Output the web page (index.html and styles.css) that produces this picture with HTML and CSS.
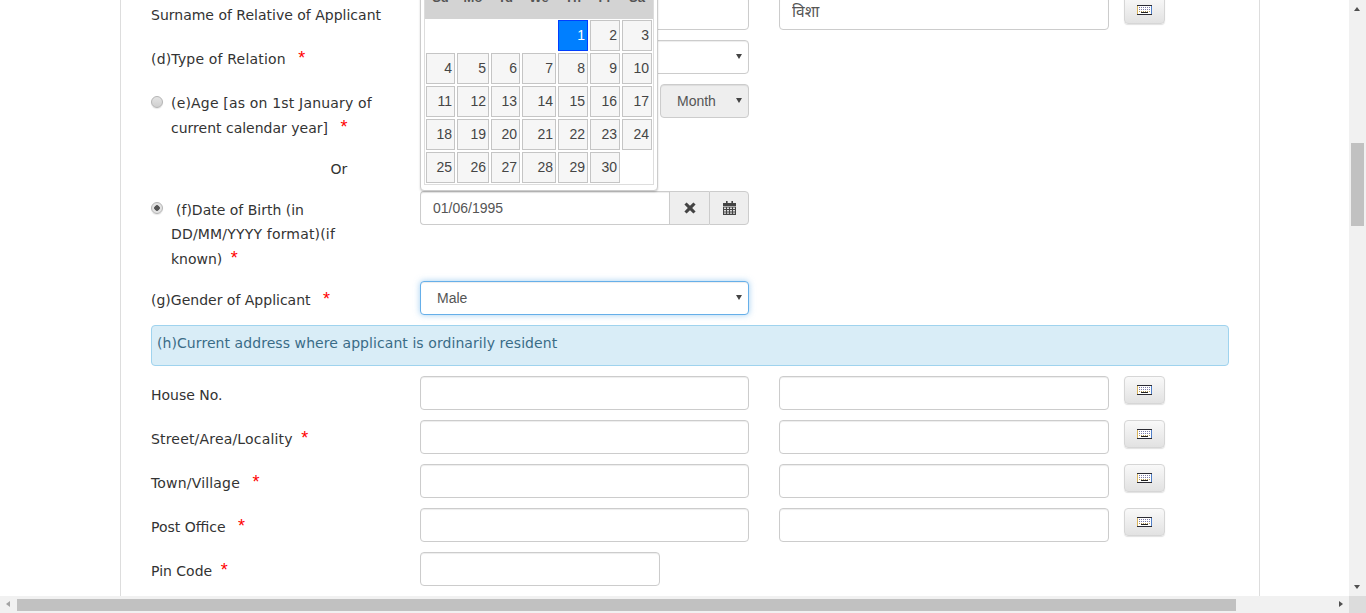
FILE: index.html
```html
<!DOCTYPE html>
<html lang="en">
<head>
<meta charset="utf-8">
<title>Applicant details</title>
<link rel="stylesheet" href="styles.css">
</head>
<body>
<svg class="defs" width="0" height="0" aria-hidden="true">
  <symbol id="kb" viewBox="0 0 15 10">
    <rect x="0.5" y="0.5" width="14" height="9" fill="#fff" stroke="#2b2b33"/>
    <path d="M0.5 1v8" stroke="#d9b45a"/><path d="M14.5 1v8" stroke="#4f7fc9"/>
    <path d="M2 2.5h11" stroke="#7d7da8" stroke-dasharray="1 1"/>
    <path d="M2 4.5h11" stroke="#7d7da8" stroke-dasharray="1 1"/>
    <path d="M2 6.5h11" stroke="#b59a5a" stroke-dasharray="1 1"/>
    <path d="M4 7.5h7" stroke="#222"/>
  </symbol>
</svg>
<div class="window">
  <div class="main">
    <div class="page">
      <form class="panel">
        <div class="row">
          <div class="label pad8">Surname of Relative of Applicant</div>
          <input class="control field" type="text">
          <input class="control wide hindi" type="text" value="विशा">
          <button class="kbd" type="button"><svg class="kbd-icon"><use href="#kb"/></svg></button>
        </div>
        <div class="row">
          <div class="label pad8"><span class="ls">(d)Type of Relation</span> <span class="star gap-l">*</span></div>
          <div class="select-wrap field"><select class="control"><option></option></select></div>
        </div>
        <div class="row age-row">
          <label class="label radio-label">
            <input class="radio" type="radio" name="dob">
            <span class="lh25"><span class="ls">(e)Age [as on 1st January of</span> current calendar year] <span class="star gap-l">*</span></span>
          </label>
          <div class="field split">
            <input class="control muted" type="text" disabled>
            <div class="select-wrap month"><select class="control muted" disabled><option>Month</option></select></div>
          </div>
        </div>
        <div class="or-row"><span>Or</span></div>
        <div class="row dob-row">
          <label class="label radio-label">
            <input class="radio" type="radio" name="dob" checked>
            <span class="dob-text">(f)Date of Birth (in <span class="ls">DD/MM/YYYY format)(if</span> known) <span class="star">*</span></span>
          </label>
          <div class="field group">
            <input class="control group-input" type="text" value="01/06/1995">
            <button class="addon" type="button">
              <svg width="12" height="12" viewBox="0 0 12 12"><path d="M2.6 0.4 6 3.8 9.4 0.4 11.6 2.6 8.2 6 11.6 9.4 9.4 11.6 6 8.2 2.6 11.6 0.4 9.4 3.8 6 0.4 2.6z" fill="#444"/></svg>
            </button>
            <button class="addon addon-last" type="button">
              <svg width="13" height="14" viewBox="0 0 13 14"><path d="M0 2h13v3H0z" fill="#444"/><path d="M3 0h1.6v3H3zM8.4 0H10v3H8.4z" fill="#444"/><path d="M0 5.6h13V14H0z" fill="#444"/><path d="M1 6.6h2v1.4H1zM4 6.6h2v1.4H4zM7 6.6h2v1.4H7zM10 6.6h2v1.4h-2zM1 9h2v1.4H1zM4 9h2v1.4H4zM7 9h2v1.4H7zM10 9h2v1.4h-2zM1 11.4h2v1.4H1zM4 11.4h2v1.4H4zM7 11.4h2v1.4H7zM10 11.4h2v1.4h-2z" fill="#ddd"/></svg>
            </button>
            <div class="calendar">
              <div class="cal-inner">
                <div class="cal-head"><span>Su</span><span>Mo</span><span>Tu</span><span>We</span><span>Th</span><span>Fr</span><span>Sa</span></div>
                <div class="cal-grid">
                  <i></i><i></i><i></i><i></i>
                  <a class="day active">1</a><a class="day">2</a><a class="day">3</a>
                  <a class="day">4</a><a class="day">5</a><a class="day">6</a><a class="day">7</a><a class="day">8</a><a class="day">9</a><a class="day">10</a>
                  <a class="day">11</a><a class="day">12</a><a class="day">13</a><a class="day">14</a><a class="day">15</a><a class="day">16</a><a class="day">17</a>
                  <a class="day">18</a><a class="day">19</a><a class="day">20</a><a class="day">21</a><a class="day">22</a><a class="day">23</a><a class="day">24</a>
                  <a class="day">25</a><a class="day">26</a><a class="day">27</a><a class="day">28</a><a class="day">29</a><a class="day">30</a><i></i>
                </div>
              </div>
            </div>
          </div>
        </div>
        <div class="row">
          <div class="label pad8">(g)Gender of Applicant <span class="star gap-l">*</span></div>
          <div class="select-wrap field"><select class="control focus"><option>Male</option></select></div>
        </div>
        <div class="alert">(h)Current address where applicant is ordinarily resident</div>
        <div class="row">
          <div class="label pad8">House No.</div>
          <input class="control field" type="text">
          <input class="control wide" type="text">
          <button class="kbd" type="button"><svg class="kbd-icon"><use href="#kb"/></svg></button>
        </div>
        <div class="row">
          <div class="label pad8"><span class="ls">Street/Area/Locality</span> <span class="star">*</span></div>
          <input class="control field" type="text">
          <input class="control wide" type="text">
          <button class="kbd" type="button"><svg class="kbd-icon"><use href="#kb"/></svg></button>
        </div>
        <div class="row">
          <div class="label pad8"><span class="ls">Town/Village</span> <span class="star gap-l">*</span></div>
          <input class="control field" type="text">
          <input class="control wide" type="text">
          <button class="kbd" type="button"><svg class="kbd-icon"><use href="#kb"/></svg></button>
        </div>
        <div class="row">
          <div class="label pad8">Post Office <span class="star gap-l">*</span></div>
          <input class="control field" type="text">
          <input class="control wide" type="text">
          <button class="kbd" type="button"><svg class="kbd-icon"><use href="#kb"/></svg></button>
        </div>
        <div class="row">
          <div class="label pad8">Pin Code <span class="star">*</span></div>
          <input class="control pin" type="text">
        </div>
      </form>
    </div>
    <div class="vbar">
      <span class="arrow up"></span>
      <span class="vthumb"></span>
      <span class="arrow down"></span>
    </div>
  </div>
  <div class="hbar">
    <span class="arrow left"></span>
    <span class="hthumb"></span>
    <span class="arrow right"></span>
    <span class="corner"></span>
  </div>
</div>
</body>
</html>
```
FILE: styles.css
```css
* { box-sizing: border-box; }
html, body { margin: 0; height: 100%; overflow: hidden; background: #fff; }
body { font-family: "Liberation Sans", Arial, sans-serif; font-size: 14px; color: #333; }
.defs { position: absolute; }

.window { display: flex; flex-direction: column; height: 613px; }
.main { display: flex; height: 596px; }
.page { width: 1349px; overflow: hidden; padding-left: 120px; }
.panel {
  width: 1140px;
  height: 600px;
  margin-top: -4px;
  padding: 0 30px;
  border-left: 1px solid #ddd;
  border-right: 1px solid #ddd;
}

.row { display: flex; align-items: flex-start; margin-bottom: 10px; }
.label {
  flex: 0 0 269px;
  min-width: 0;
  font-family: "DejaVu Sans", Verdana, sans-serif;
  font-size: 14px;
  color: #333;
  padding-right: 40px;
}
.ls { letter-spacing: 0.18px; }
.pad8 { padding-top: 11px; line-height: 16px; white-space: nowrap; }
.star {
  color: #f00;
  margin-left: 4px;
  font-family: "Liberation Sans", Arial, sans-serif;
  font-size: 18px;
  line-height: 0;
}
.gap-l { margin-left: 8px; }

.control {
  display: block;
  width: 100%;
  height: 34px;
  padding: 6px 12px;
  border: 1px solid #ccc;
  border-radius: 4px;
  background: #fff;
  color: #555;
  font-family: "Liberation Sans", Arial, "Noto Sans", sans-serif;
  font-size: 14px;
  box-shadow: inset 0 1px 1px rgba(0,0,0,.075);
  outline: none;
}
.field { flex: 0 0 329px; width: 329px; }
.wide { flex: 0 0 330px; width: 330px; margin-left: 30px; }
.hindi { font-size: 15.5px; padding-bottom: 11px; }
.pin { width: 240px; }
.muted, .muted:disabled { background: #eee; color: #555; opacity: 1; }
.focus { border-color: #66afe9; box-shadow: inset 0 1px 1px rgba(0,0,0,.075), 0 0 6px rgba(102,175,233,.6); }

.select-wrap { position: relative; }
.select-wrap select { appearance: none; -webkit-appearance: none; padding-left: 16px; }
.select-wrap::after {
  content: "";
  position: absolute;
  right: 7px;
  top: 14px;
  border-left: 3px solid transparent;
  border-right: 3px solid transparent;
  border-top: 5px solid #444;
}
.month { flex: 0 0 89px; }
.split { display: flex; gap: 10px; }
.split > input { flex: 1; min-width: 0; }

.kbd {
  display: flex;
  align-items: center;
  justify-content: center;
  width: 41px;
  height: 28px;
  margin-left: 15px;
  padding: 0;
  border: 1px solid #d6d6d6;
  border-radius: 4px;
  background: linear-gradient(#f9f9f9, #e2e2e2);
  box-shadow: 0 1px 1px rgba(0,0,0,.12);
}
.kbd-icon { width: 15px; height: 10px; display: block; }

.radio-label { display: flex; gap: 8px; }
.radio {
  appearance: none;
  -webkit-appearance: none;
  flex: 0 0 12px;
  width: 12px;
  height: 12px;
  margin: 0;
  border: 1px solid #b4b4b4;
  border-radius: 50%;
  background: linear-gradient(#e4e4e4, #cfcfcf);
  box-shadow: 0 1px 1px rgba(0,0,0,.1);
}
.radio:checked { background: radial-gradient(circle, #555 0 2.5px, #e2e2e2 3px); }
.age-row { height: 63px; }
.age-row .radio-label { padding-top: 12px; }
.lh25 { line-height: 25px; margin-top: -5px; }
.or-row { height: 24px; margin-bottom: 10px; padding-left: 179.5px; line-height: 24px; font-family: "DejaVu Sans", Verdana, sans-serif; font-size: 14px; }
.dob-row { height: 80px; }
.dob-row .radio-label { padding-top: 11px; }
.dob-text { line-height: 24.3px; margin-top: -4px; text-indent: 5px; }

.group { display: flex; position: relative; height: 34px; }
.group-input { width: 249px; flex: 0 0 249px; border-radius: 4px 0 0 4px; border-right: 0; }
.addon {
  display: flex;
  align-items: center;
  justify-content: center;
  flex: 0 0 40px;
  height: 34px;
  padding: 0;
  background: #eee;
  border: 1px solid #ccc;
  border-right: 0;
}
.addon-last { flex: 0 0 40px; border-right: 1px solid #ccc; border-radius: 0 4px 4px 0; }

.calendar {
  position: absolute;
  left: 0;
  bottom: 100%;
  width: 238px;
  padding: 3px 3px 5px;
  background: #fff;
  border: 1px solid #ccc;
  border-radius: 4px;
  box-shadow: 0 1px 2px rgba(0,0,0,.18);
}
.cal-inner { border: 1px solid #ddd; border-top: 0; }
.cal-head, .cal-grid {
  display: grid;
  grid-template-columns: 29px 32px 29px 34px 30px 30px 30px;
  column-gap: 2px;
  padding: 0 1px;
}
.cal-head {
  height: 30px;
  background: #d3d3d3;
  margin-bottom: 1px;
  font-weight: bold;
  font-size: 13px;
  color: #555;
  text-align: center;
  line-height: 18px;
}
.cal-grid { grid-auto-rows: 31px; row-gap: 2px; padding: 0 1px 1px; }
.day {
  border: 1px solid #c5c5c5;
  background: #f6f6f6;
  color: #454545;
  text-align: right;
  padding: 6px 2px 0 0;
  line-height: 17px;
}
.active { background: #007fff; border-color: #003eff; color: #fff; }

.alert {
  height: 41px;
  margin-bottom: 10px;
  padding: 0 5px;
  line-height: 34px;
  background: #d9edf7;
  border: 1px solid #9fd3ee;
  border-radius: 4px;
  color: #3a6c87;
  font-family: "DejaVu Sans", Verdana, sans-serif;
  font-size: 14px;
  letter-spacing: 0.07px;
}

.vbar { position: relative; width: 17px; height: 596px; background: #f1f1f1; }
.vthumb { position: absolute; left: 2px; top: 143px; width: 13px; height: 83px; background: #c1c1c1; }
.hbar { display: flex; align-items: center; position: relative; height: 17px; background: #f1f1f1; }
.hthumb { position: absolute; left: 17px; top: 3px; width: 1219px; height: 12px; background: #c1c1c1; }
.corner { position: absolute; right: 0; top: 0; width: 17px; height: 17px; background: #dcdcdc; }
.arrow { position: absolute; width: 0; height: 0; border: solid transparent; }
.up { left: 5px; top: 7px; border-width: 0 3.5px 4px; border-bottom-color: #505050; }
.down { left: 5px; top: 585px; border-width: 4px 3.5px 0; border-top-color: #505050; }
.left { left: 6px; top: 5px; border-width: 3.5px 4px 3.5px 0; border-right-color: #a3a3a3; }
.right { left: 1339px; top: 5px; border-width: 3.5px 0 3.5px 4px; border-left-color: #505050; }
```
